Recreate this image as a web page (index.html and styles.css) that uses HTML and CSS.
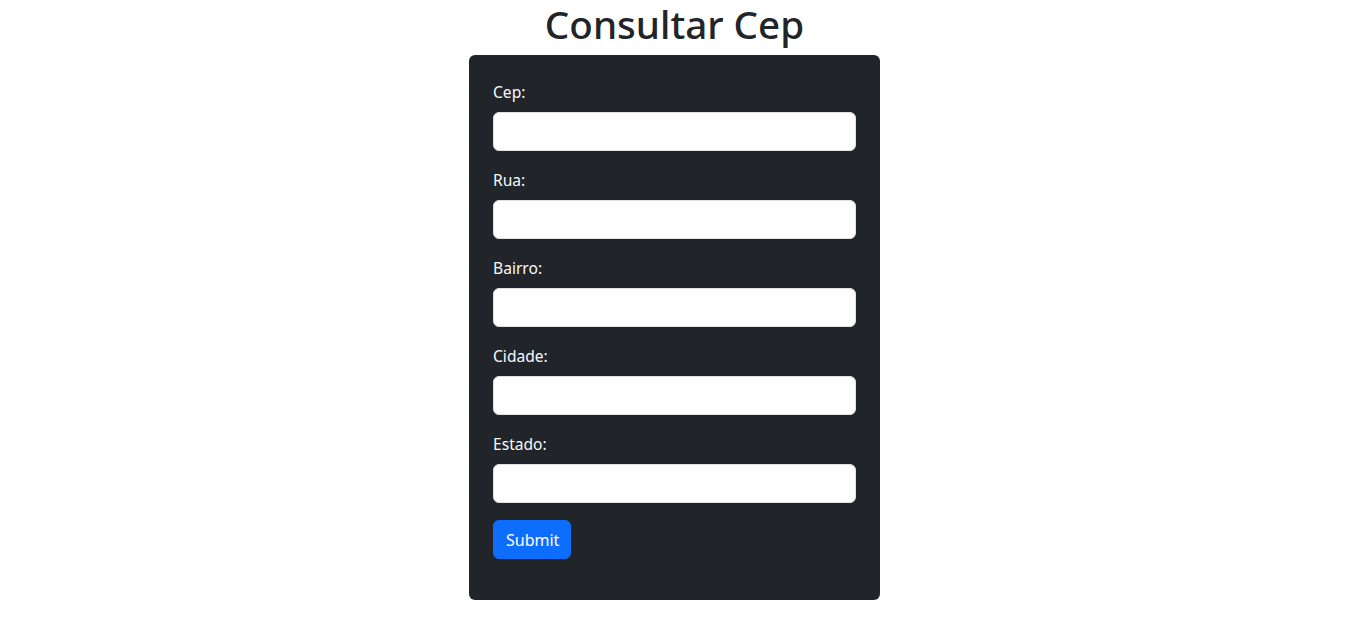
FILE: index.html
```html
<!DOCTYPE html>
<html lang="pt">
<head>
<meta charset="utf-8">
<title>Consultar Cep</title>
<link rel="stylesheet" href="styles.css">
</head>
<body>
<h1 class="title">Consultar Cep</h1>
<form class="card">
  <div class="field">
    <label class="label" for="cep">Cep:</label>
    <input class="input" id="cep" type="text">
  </div>
  <div class="field">
    <label class="label" for="rua">Rua:</label>
    <input class="input" id="rua" type="text">
  </div>
  <div class="field">
    <label class="label" for="bairro">Bairro:</label>
    <input class="input" id="bairro" type="text">
  </div>
  <div class="field">
    <label class="label" for="cidade">Cidade:</label>
    <input class="input" id="cidade" type="text">
  </div>
  <div class="field">
    <label class="label" for="estado">Estado:</label>
    <input class="input" id="estado" type="text">
  </div>
  <div class="actions">
    <button class="btn" type="submit">Submit</button>
  </div>
</form>
</body>
</html>
```
FILE: styles.css
```css
* { box-sizing: border-box; }
body {
  margin: 0;
  font-family: "Noto Sans", "Open Sans", sans-serif;
  font-size: 16px;
  line-height: 1.5;
  color: #212529;
  background: #fff;
  display: flex;
  flex-direction: column;
  align-items: center;
}
.title {
  margin: 0 0 7px;
  font-size: 38.6px;
  font-weight: 500;
  line-height: 48px;
  text-align: center;
}
.card {
  width: 411px;
  background: #212529;
  border-radius: 6px;
  padding: 25px 24px 25px 24px;
  display: flex;
  flex-direction: column;
  gap: 17px;
}
.field {
  display: flex;
  flex-direction: column;
}
.label {
  color: #f8f9fa;
  font-size: 15.6px;
  line-height: 24px;
  margin-bottom: 8px;
}
.input {
  height: 39px;
  width: 100%;
  border: 1px solid #dee2e6;
  border-radius: 6px;
  background: #fff;
  padding: 6px 12px;
  font: inherit;
}
.actions {
  display: flex;
  margin-bottom: 16px;
}
.btn {
  background: #0d6efd;
  color: #fff;
  border: 1px solid #0d6efd;
  border-radius: 6px;
  padding: 6px 12px;
  font: inherit;
  font-size: 16px;
  line-height: 24px;
  height: 39px;
  width: 78px;
}
```
